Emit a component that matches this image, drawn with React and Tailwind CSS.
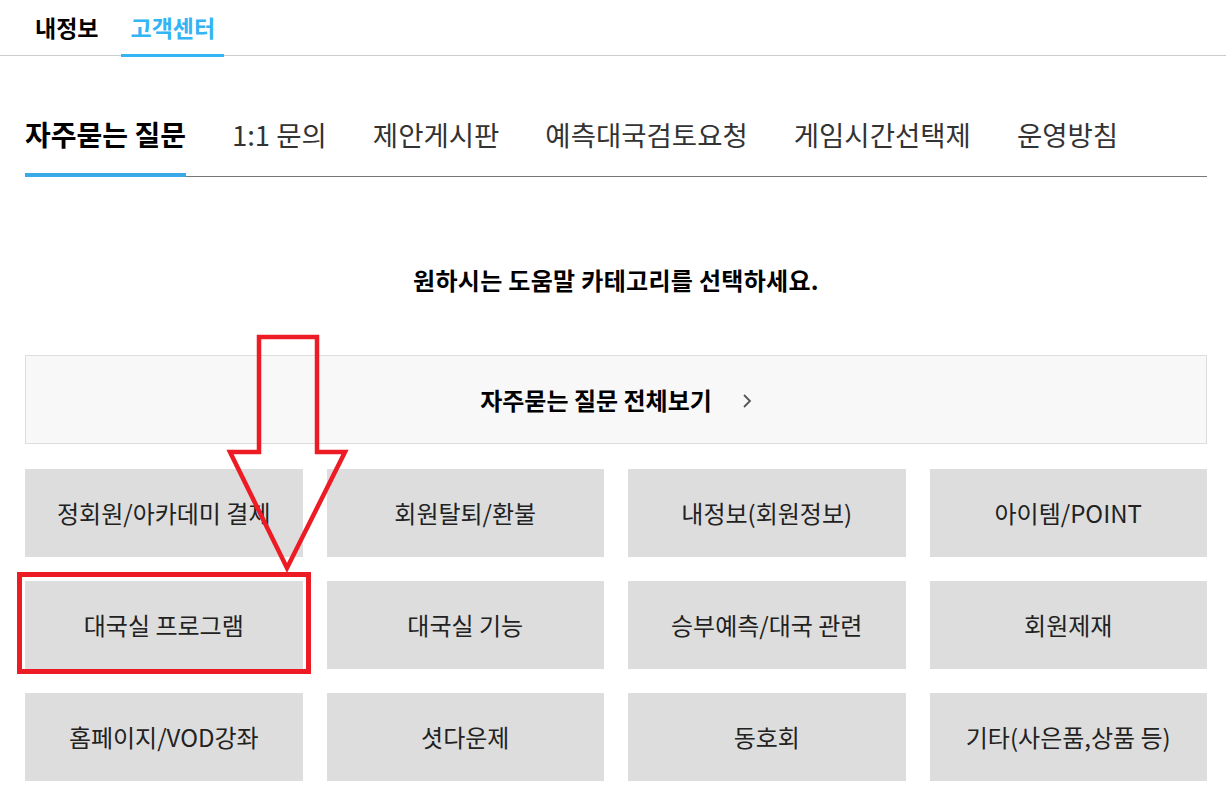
const categories = [
  "정회원/아카데미 결제",
  "회원탈퇴/환불",
  "내정보(회원정보)",
  "아이템/POINT",
  "대국실 프로그램",
  "대국실 기능",
  "승부예측/대국 관련",
  "회원제재",
  "홈페이지/VOD강좌",
  "셧다운제",
  "동호회",
  "기타(사은품,상품 등)",
];

const tabs = ["자주묻는 질문", "1:1 문의", "제안게시판", "예측대국검토요청", "게임시간선택제", "운영방침"];

const App = () => {
  return (
    <div
      className="relative w-[1226px] min-h-[810px] bg-white text-[#222]"
      style={{ fontFamily: '"Noto Sans CJK KR", "Noto Sans", sans-serif' }}
    >
      {/* top nav */}
      <div className="flex h-[56px] border-b border-[#cccccc] pl-[26px] gap-[14px]">
        <div className="px-[9px] flex items-center h-[55px] text-[23px] font-bold text-black">내정보</div>
        <div className="relative px-[9px] flex items-center h-[55px] text-[23px] font-bold text-[#33b4f4]">
          고객센터
          <span className="absolute left-0 right-0 bottom-[-2px] h-[3px] bg-[#33b4f4]" />
        </div>
      </div>

      <div className="ml-[25px] w-[1182px]">
        {/* tabs */}
        <div className="mt-[60px] flex gap-[46px] border-b border-[#777777]">
          {tabs.map((t, i) => (
            <div
              key={t}
              className={
                i === 0
                  ? "relative pb-[24px] text-[28px] leading-[36px] font-bold text-black"
                  : "relative pb-[24px] text-[27.5px] leading-[36px] text-[#333]"
              }
            >
              {t}
              {i === 0 && <span className="absolute left-0 right-0 bottom-[-1px] h-[4px] bg-[#3aa9e8]" />}
            </div>
          ))}
        </div>

        <h2 className="mt-[88px] text-center text-[24px] leading-[30px] tracking-[0.3px] font-bold text-black">
          원하시는 도움말 카테고리를 선택하세요.
        </h2>

        <div className="mt-[60px] h-[89px] border border-[#dddddd] bg-[#f8f8f8] flex items-center justify-center gap-[30px]">
          <span className="text-[24px] font-bold text-black">자주묻는 질문 전체보기</span>
          <svg width="10" height="16" viewBox="0 0 10 16" className="mt-[2px]">
            <polyline points="2,2 8,8 2,14" fill="none" stroke="#555" strokeWidth="1.8" />
          </svg>
        </div>

        <div className="mt-[25px] grid grid-cols-4 gap-[24px]">
          {categories.map((c, i) => (
            <div
              key={c}
              className="relative h-[88px] bg-[#dddddd] flex items-center justify-center text-[24px] text-[#222]"
            >
              {c}
              {i === 4 && (
                <span className="absolute left-[-8px] top-[-9px] right-[-8px] bottom-[-5px] border-[5px] border-[#ed1c24]" />
              )}
            </div>
          ))}
        </div>
      </div>

      {/* arrow annotation */}
      <svg className="absolute left-0 top-0 pointer-events-none" width="400" height="600">
        <polygon
          points="259,337 317,337 317,452 345,452 287,568 230,452 259,452"
          fill="none"
          stroke="#ed1c24"
          strokeWidth="4.5"
        />
      </svg>
    </div>
  );
};

export default App;
